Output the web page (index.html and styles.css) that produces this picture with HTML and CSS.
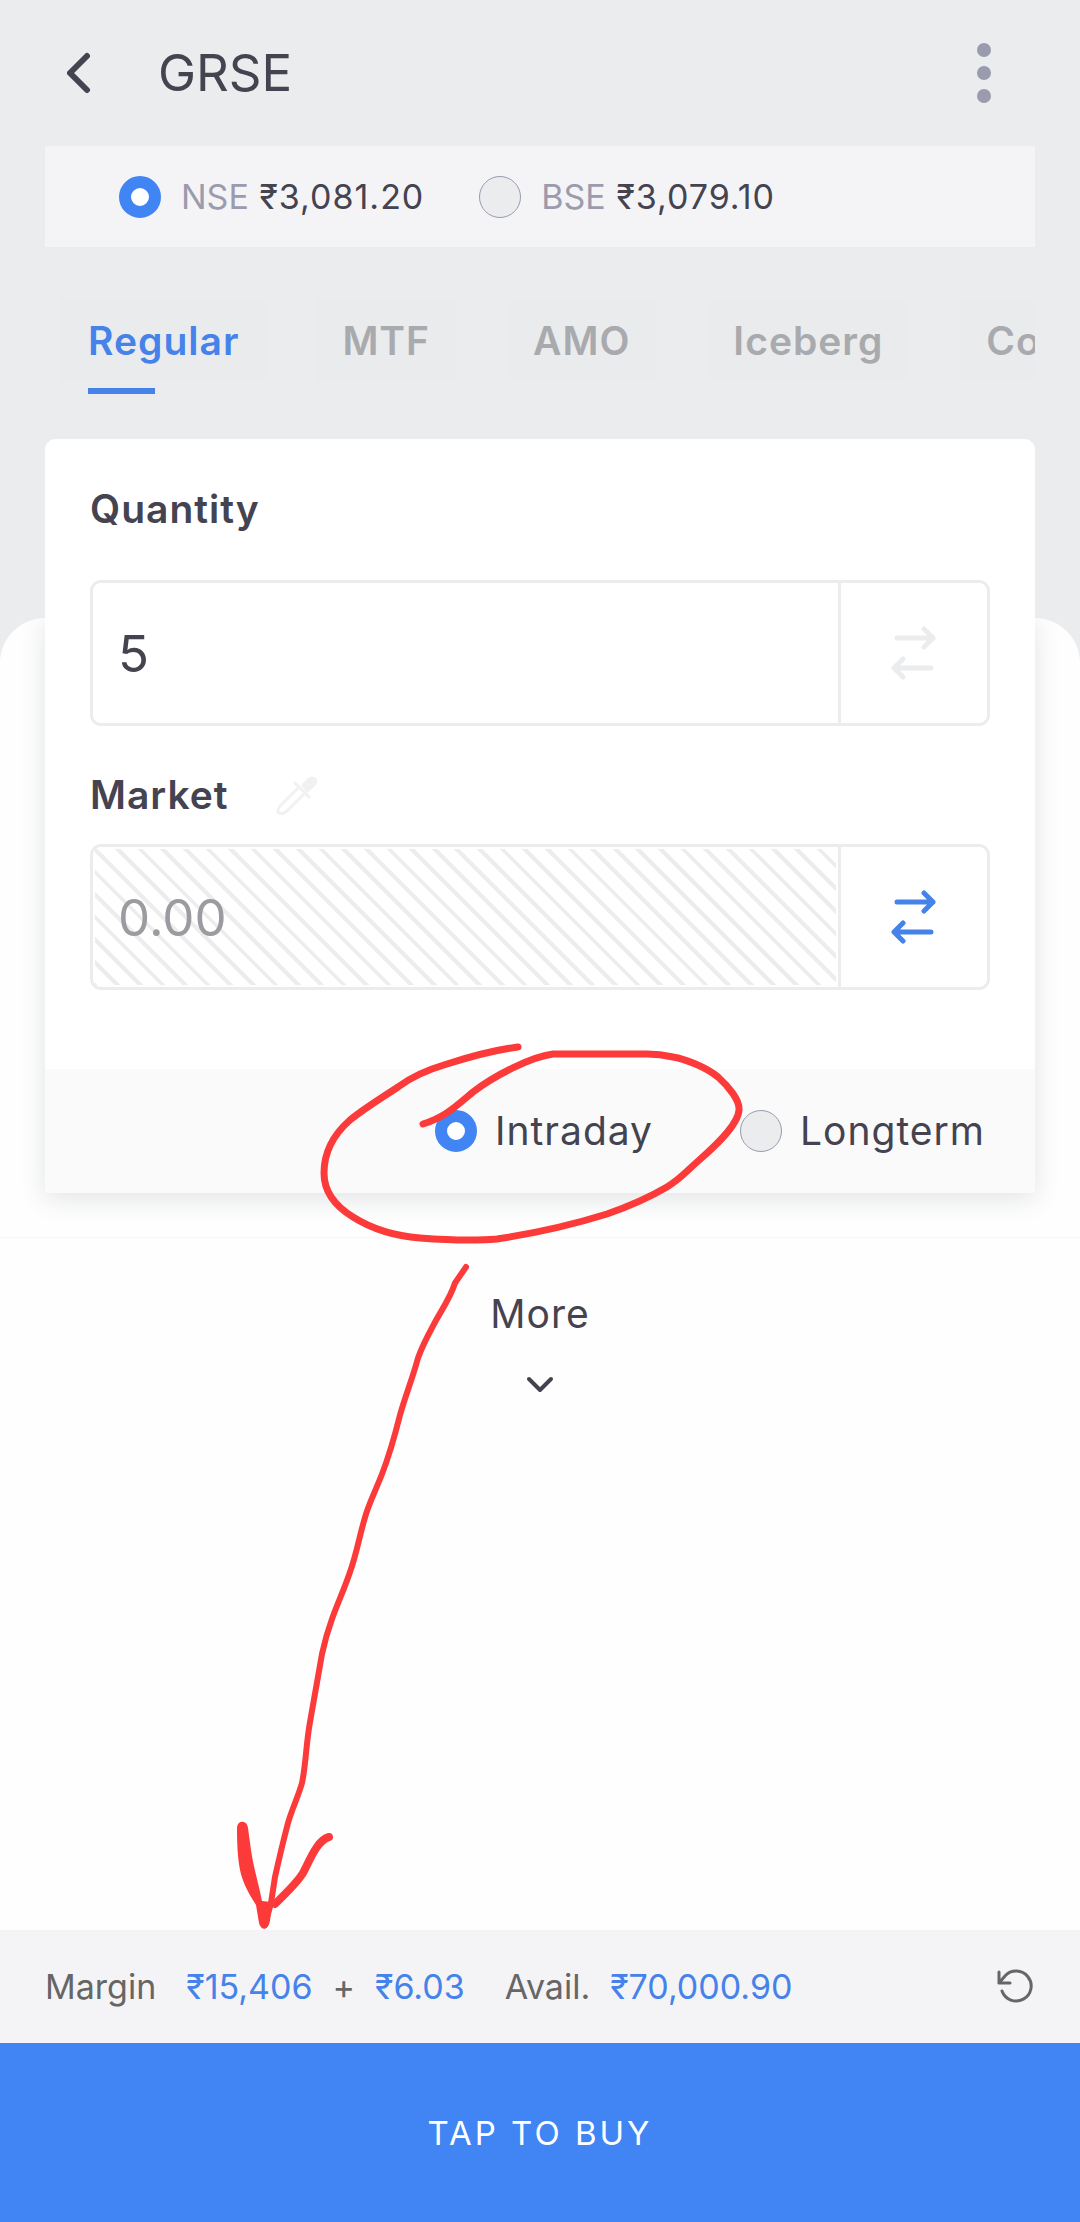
FILE: index.html
```html
<!DOCTYPE html>
<html lang="en">

<head>
    <meta charset="UTF-8">
    <meta name="viewport" content="width=device-width, initial-scale=1.0">
    <title>GRSE - Order</title>
    <link rel="stylesheet" href="styles.css">
</head>

<body>
    <header>
        <div class="topbar">
            <button type="button" aria-label="Back">
                <svg width="24" height="42" viewBox="0 0 24 42"><path d="M20 4 L3 21 L20 38"/></svg>
            </button>
            <h1>GRSE</h1>
            <button type="button" class="menu" aria-label="Menu">
                <svg width="14" height="60" viewBox="0 0 14 60">
                    <circle cx="7" cy="7" r="7"/>
                    <circle cx="7" cy="30" r="7"/>
                    <circle cx="7" cy="53" r="7"/>
                </svg>
            </button>
        </div>

        <div class="exchange">
            <input type="radio" id="nse" name="exchange" checked>
            <label for="nse"><span>NSE</span> ₹3,081.20</label>
            <input type="radio" id="bse" name="exchange">
            <label for="bse"><span>BSE</span> ₹3,079.10</label>
        </div>

        <nav>
            <a href="#" class="active">Regular</a>
            <a href="#">MTF</a>
            <a href="#">AMO</a>
            <a href="#">Iceberg</a>
            <a href="#">Cover</a>
        </nav>
    </header>

    <main>
        <form class="card" id="order-form">
            <div class="fields">
                <div class="field-label">
                    <label for="quantity">Quantity</label>
                </div>
                <div class="field quantity">
                    <input type="text" id="quantity" name="quantity" value="5">
                    <button type="button" class="swap off" aria-label="Switch quantity type">
                        <svg width="46" height="54" viewBox="0 0 46 54">
                            <path d="M6 12 H42 M33 3 L42 12 L33 21"/>
                            <path d="M40 42 H4 M12 33 L3 42 L12 51"/>
                        </svg>
                    </button>
                </div>
                <div class="field-label">
                    <label for="price">Market</label>
                    <svg class="picker" width="42" height="40" viewBox="0 0 42 40">
                        <path class="fill" d="M25 10 L32 3 Q36 0 40 3 Q43 7 39 11 L31 18 Z"/>
                        <path d="M19 8 L33 22 M23 12 L4 31 Q0 37 3 38 Q6 40 11 36 L29 18"/>
                    </svg>
                </div>
                <div class="field">
                    <input type="text" id="price" name="price" value="0.00" disabled>
                    <button type="button" class="swap" aria-label="Switch price type">
                        <svg width="46" height="54" viewBox="0 0 46 54">
                            <path d="M6 12 H42 M33 3 L42 12 L33 21"/>
                            <path d="M40 42 H4 M12 33 L3 42 L12 51"/>
                        </svg>
                    </button>
                </div>
            </div>
            <div class="product">
                <input type="radio" id="intraday" name="product" checked>
                <label for="intraday">Intraday</label>
                <input type="radio" id="longterm" name="product">
                <label for="longterm">Longterm</label>
            </div>
        </form>

        <button type="button" class="more">
            More
            <svg width="28" height="18" viewBox="0 0 28 18"><path d="M3 3 L14 14 L25 3"/></svg>
        </button>

        <!-- Hand drawn marks -->
        <svg class="marks" viewBox="0 618 1080 1312" aria-hidden="true">
            <path d="M518 1047 C494 1050 469 1057 447 1064 C430 1069 411 1077 398 1087 C380 1099 365 1108 350 1120 C333 1135 324 1152 324 1173 C324 1192 335 1206 353 1217 C372 1229 395 1236 420 1238 C446 1240 475 1241 497 1239 C530 1234 575 1224 607 1214 C630 1206 650 1197 667 1187 C680 1179 688 1170 697 1162 C712 1149 738 1126 739 1110 C740 1100 728 1086 718 1077 C706 1067 685 1059 673 1057 C660 1054 655 1054 647 1054 L553 1054 C530 1057 494 1076 473 1092 C455 1107 445 1117 423 1124"/>
            <path class="thin" d="M466 1267 L455 1283 C450 1299 440 1312 433 1326 C427 1337 422 1347 418 1358 C413 1377 406 1394 400 1415 C395 1435 389 1456 382 1474 C377 1487 372 1497 367 1511 C360 1532 357 1553 350 1572 C344 1590 338 1602 332 1619 C328 1630 325 1640 322 1654 C318 1676 314 1699 310 1722 C306 1744 306 1764 302 1783 C298 1797 292 1809 288 1823 C283 1842 279 1859 275 1877 L271 1903 L265 1925"/>
            <path class="fill" d="M237 1827 C238 1820 247 1820 248 1828 L251 1850 C254 1870 259 1885 262 1901 L272 1902 L270 1921 C268 1931 261 1931 259 1923 L256 1905 C242 1882 237 1873 237 1827 Z"/>
            <path class="thick" d="M329 1837 C317 1840 309 1862 303 1873 C297 1883 285 1894 275 1904"/>
        </svg>
    </main>

    <footer>
        <div class="funds">
            <span>Margin</span>
            <a href="#">₹15,406</a>
            <span class="plus">+</span>
            <a href="#">₹6.03</a>
            <span class="avail">Avail.</span>
            <a href="#">₹70,000.90</a>
            <button type="button" class="refresh" aria-label="Refresh">
                <svg width="38" height="36" viewBox="-1 0 38 36"><path d="M1 3 V14 H12 M1 14 L7 7 A15 15 0 1 1 4 22"/></svg>
            </button>
        </div>
        <button type="submit" form="order-form" class="buy">TAP TO BUY</button>
    </footer>
</body>

</html>
```
FILE: styles.css
```css
* {
    box-sizing: border-box;
}

body {
    font-family: Inter, sans-serif;
    margin: 0;
    min-height: 100vh;
    display: flex;
    flex-direction: column;
    background-color: #ebeced;
    color: #44434f;
    font-size: 39px;
    line-height: 48px;
    letter-spacing: 1px;
}

button,
input {
    font: inherit;
    letter-spacing: inherit;
    color: inherit;
    margin: 0;
    padding: 0;
    border: none;
    background: none;
}

a {
    text-decoration: none;
}

svg {
    display: block;
    fill: none;
    stroke: currentColor;
    stroke-width: 5px;
    stroke-linecap: round;
    stroke-linejoin: round;
}

/* Header, the card is pulled up over its lower part */
header {
    padding-bottom: 224px;
}

.topbar {
    display: flex;
    align-items: center;
    height: 146px;
    padding: 0 89px 0 67px;
}

.topbar h1 {
    margin: 0 auto 0 67px;
    font-size: 51px;
    font-weight: 400;
    letter-spacing: 0;
}

.topbar svg {
    stroke-width: 6px;
}

.menu svg {
    fill: #9b9bae;
    stroke: none;
}

.exchange {
    display: flex;
    align-items: center;
    height: 101px;
    margin: 0 45px;
    padding-left: 74px;
    background-color: #f4f4f7;
    font-size: 34px;
}

.exchange span {
    color: #9b9bae;
    letter-spacing: 0;
}

.exchange label {
    margin: 0 55px 0 20px;
}

input[type="radio"] {
    appearance: none;
    flex: none;
    width: 42px;
    height: 42px;
    border: 1px solid #9b9bae;
    border-radius: 50%;
    background-color: #ebeced;
}

input[type="radio"]:checked {
    border: 12px solid #4184f3;
    background-color: #fff;
}

nav {
    display: flex;
    gap: 49px;
    margin: 51px 45px 0;
    padding: 0 0 12px 16px;
    overflow: hidden;
}

nav a {
    position: relative;
    padding: 19px 27px 17px;
    background-color: #eaebec;
    color: #a9aaae;
    font-weight: 600;
}

nav .active {
    color: #4583ea;
}

nav .active::after {
    content: "";
    position: absolute;
    left: 27px;
    bottom: -12px;
    width: 67px;
    height: 6px;
    background-color: #4583ea;
}

/* White sheet */
main {
    position: relative;
    isolation: isolate;
    flex: 1;
    display: flex;
    flex-direction: column;
    background-color: #fefefe;
    border-radius: 45px 45px 0 0;
}

.card {
    position: relative;
    margin: -179px 45px 44px;
    background-color: #fff;
    border-radius: 11px 11px 0 0;
}

/* Shadow falls on the white sheet only */
.card::before {
    content: "";
    position: absolute;
    z-index: -1;
    inset: 179px 0 0;
    box-shadow: 0 6px 24px rgba(60, 70, 80, 0.14);
    clip-path: inset(0 -45px -44px);
}

.fields {
    padding: 46px 45px 79px;
}

.field-label {
    display: flex;
    align-items: center;
    gap: 47px;
    font-weight: 600;
}

.picker {
    color: #f0f1f2;
    stroke-width: 3px;
}

.fill {
    fill: currentColor;
    stroke: none;
}

.field {
    display: flex;
    height: 146px;
    margin-top: 25px;
    border: 3px solid #ebeced;
    border-radius: 11px;
}

.field.quantity {
    margin: 47px 0 45px;
}

.field input {
    flex: 1;
    min-width: 0;
    padding: 0 25px;
    font-size: 51px;
    letter-spacing: 0;
}

.field input:disabled {
    margin: 2px;
    padding: 0 23px;
    color: #9c9ca0;
    background: repeating-linear-gradient(45deg, #ededee 0 2px, #fff 2px 14px, #ededee 14px 16px);
}

.swap {
    display: grid;
    place-items: center;
    width: 149px;
    border-left: 3px solid #ebeced;
    color: #4583ea;
}

.swap.off {
    color: #ebeced;
}

.product {
    display: flex;
    justify-content: flex-end;
    align-items: center;
    height: 124px;
    padding-right: 50px;
    background-color: #fafafa;
}

.product label {
    margin-left: 18px;
}

.product label + input {
    margin-left: 87px;
}

.more {
    display: flex;
    flex-direction: column;
    align-items: center;
    gap: 38px;
    padding-top: 52px;
    border-top: 1px solid #f7f7f7;
}

.more svg {
    stroke-width: 4px;
}

.marks {
    position: absolute;
    inset: 0;
    width: 100%;
    height: 100%;
    color: #fd3a3a;
    stroke-width: 7px;
    pointer-events: none;
}

.marks .thin {
    stroke-width: 6px;
}

.marks .thick {
    stroke-width: 8px;
}

/* Footer */
.funds {
    display: flex;
    align-items: center;
    height: 113px;
    padding: 0 45px;
    background-color: #f4f4f7;
    color: #666;
    font-size: 34px;
    letter-spacing: 0;
}

.funds a {
    margin-left: 30px;
    color: #4583ea;
}

.funds .plus,
.funds .plus + a {
    margin-left: 20px;
}

.funds .avail {
    margin-left: 40px;
}

.funds .avail + a {
    margin-left: 20px;
}

.refresh {
    margin-left: auto;
}

.refresh svg {
    stroke-width: 3px;
}

.buy {
    display: block;
    width: 100%;
    height: 179px;
    background-color: #4184f3;
    color: #fff;
    font-size: 33px;
    letter-spacing: 3px;
}
```
